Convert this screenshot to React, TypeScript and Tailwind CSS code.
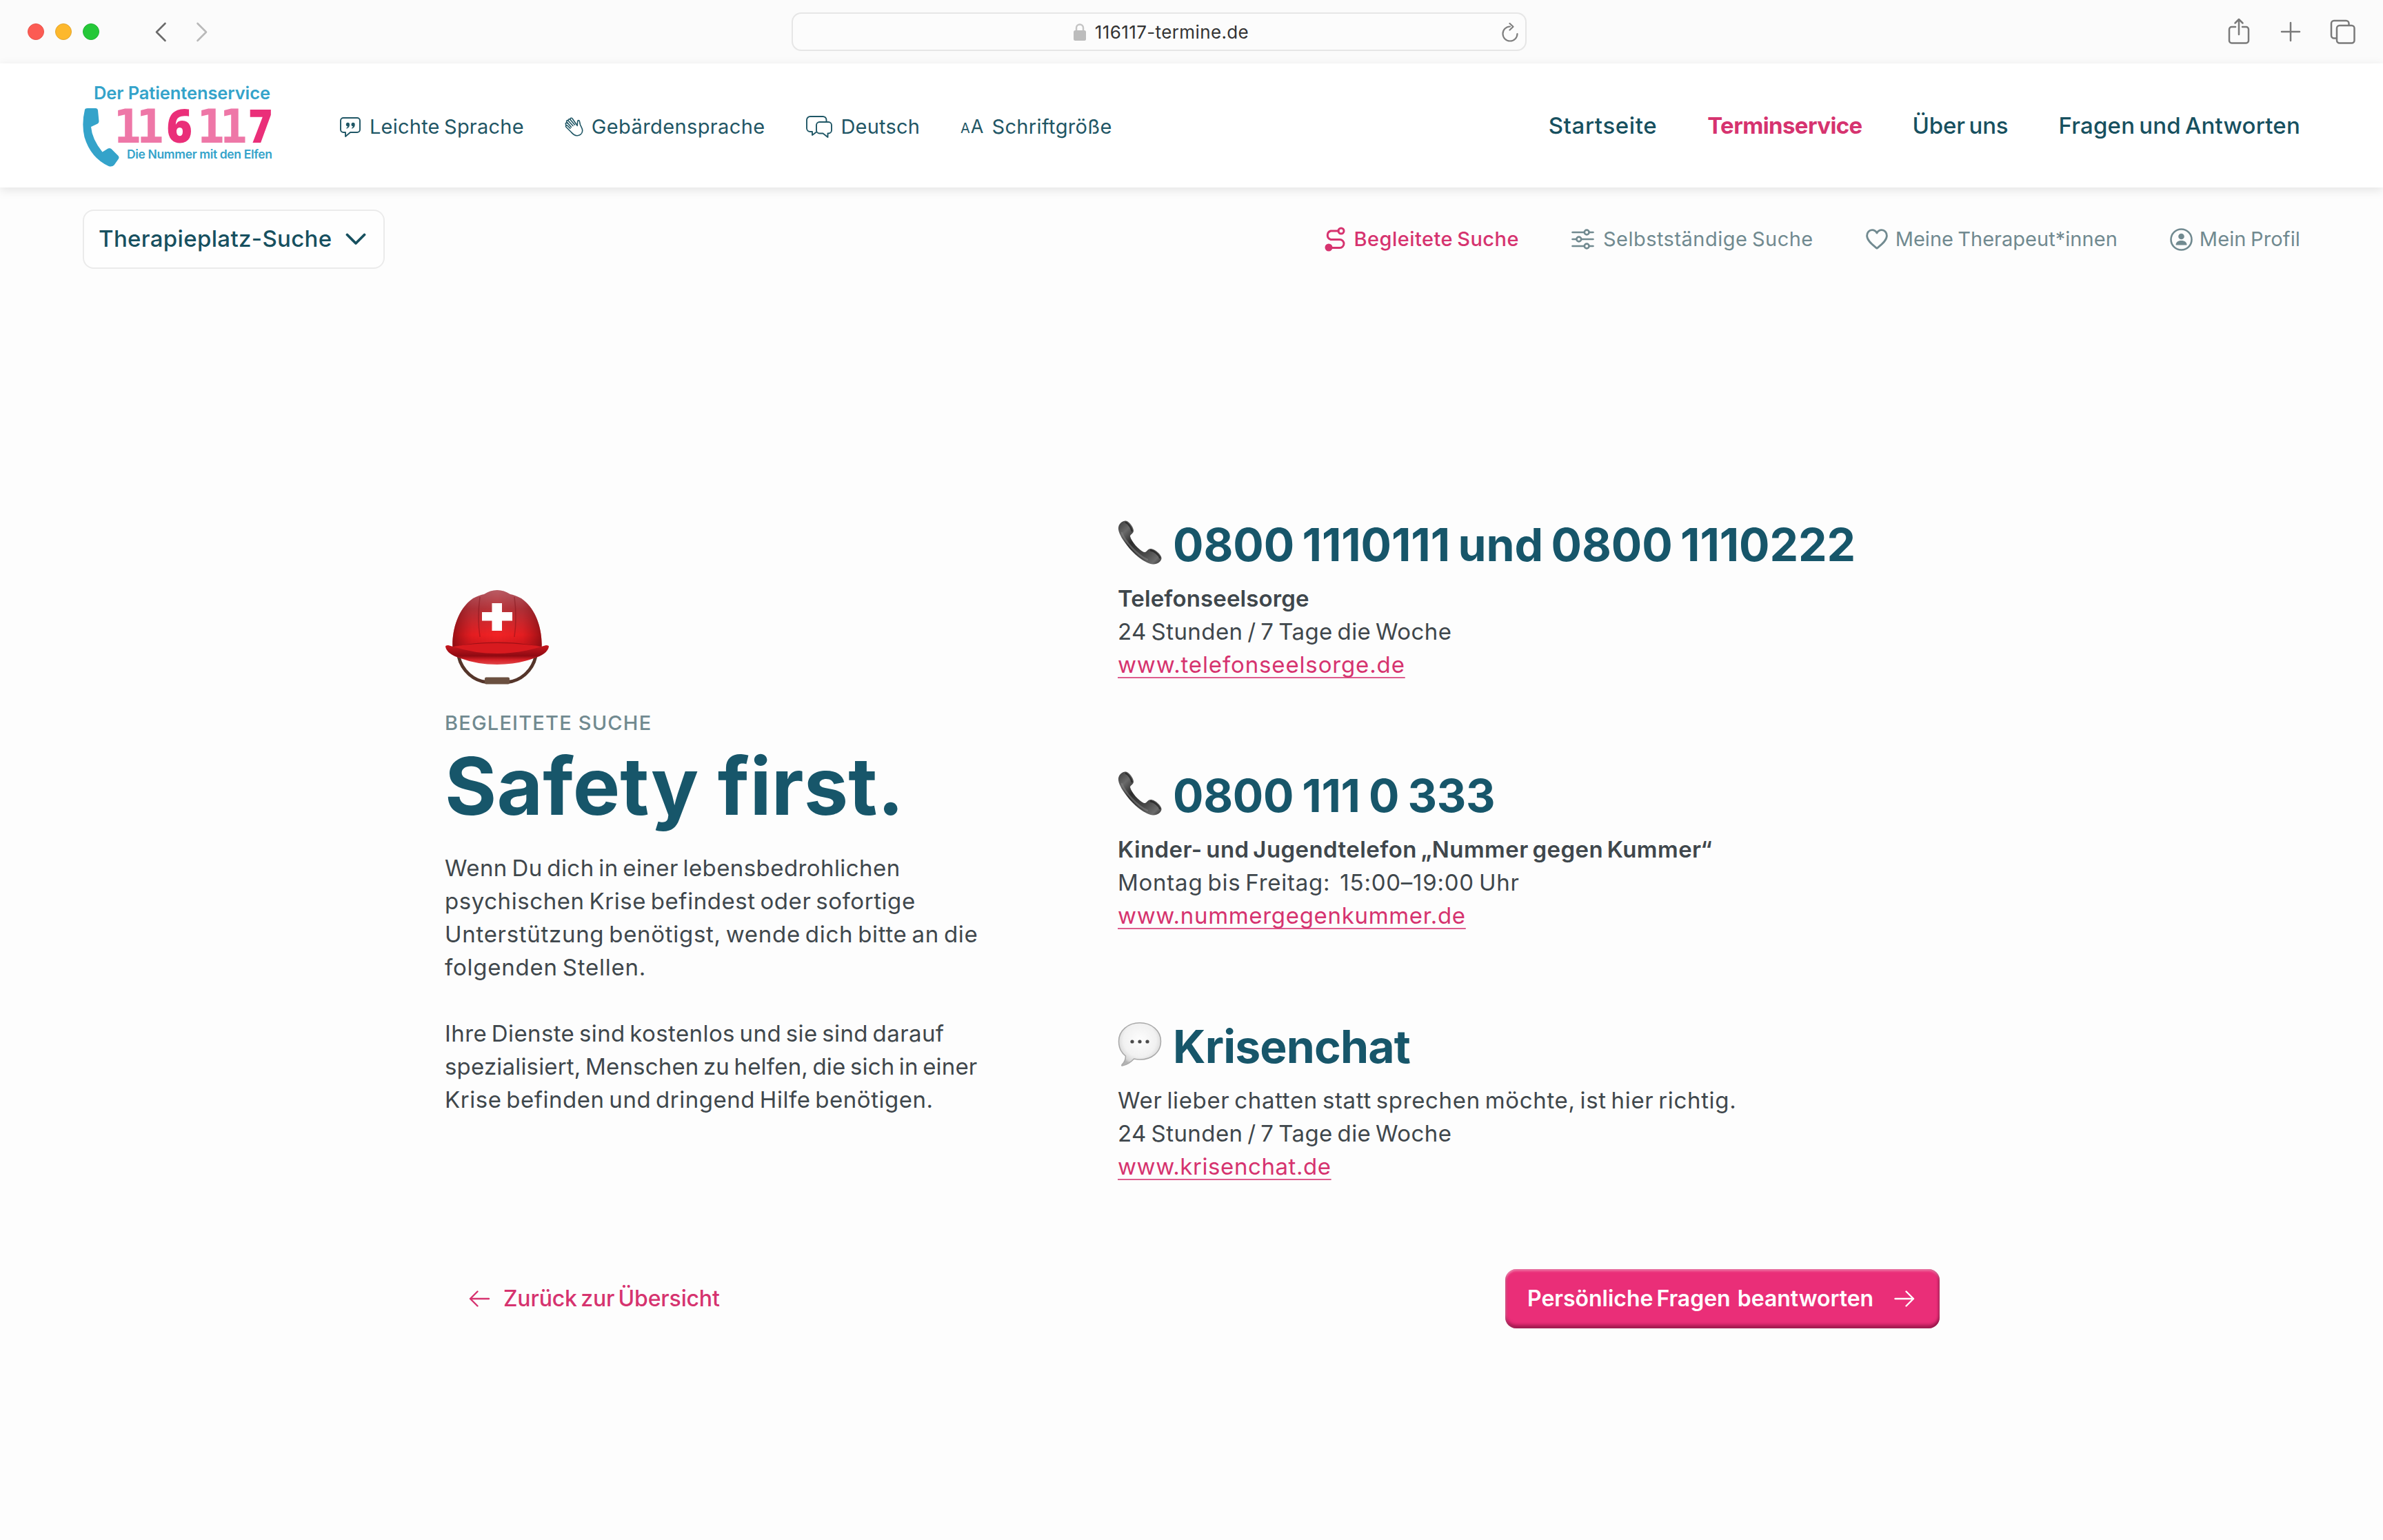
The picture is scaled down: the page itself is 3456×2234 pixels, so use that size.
import React from "react";

/* ---------- Browser chrome ---------- */

const BrowserBar = () => (
  <div className="grid h-[92px] shrink-0 grid-cols-[1148px_1066px_1fr] items-center bg-[#fbfbfb]">
    <div className="flex items-center pl-10">
      <div className="flex gap-4">
        <span className="size-6 rounded-full border border-[#e8554d] bg-[#fc5b53]" />
        <span className="size-6 rounded-full border border-[#e3a62f] bg-[#fdb82c]" />
        <span className="size-6 rounded-full border border-[#22b334] bg-[#25c838]" />
      </div>
      <svg className="ml-20 h-[30px] w-[18px]" viewBox="0 0 18 30" fill="none" stroke="#6b6b6b" strokeWidth="2.6" strokeLinecap="round" strokeLinejoin="round">
        <path d="M15.500 3L3 15.500L15.500 28" />
      </svg>
      <svg className="ml-[42px] h-[30px] w-[18px]" viewBox="0 0 18 30" fill="none" stroke="#b9b9b9" strokeWidth="2.6" strokeLinecap="round" strokeLinejoin="round">
        <path d="M2.500 3L15 15.500L2.500 28" />
      </svg>
    </div>
    <div className="relative flex h-14 items-center justify-center rounded-[14px] border-2 border-[#e6e6e6] bg-[#fcfcfc] pl-[5px] text-[26px] tracking-[0.38px] text-[#333]">
      <svg className="mr-3 h-[27px] w-5" viewBox="0 0 20 27">
        <path d="M5 12V7.500a5 5 0 0 1 10 0V12" fill="none" stroke="#c4c4c4" strokeWidth="2.400" />
        <rect x="1" y="11" width="18" height="15" rx="2.500" fill="#bcbcbc" />
      </svg>
      <span>116117-termine.de</span>
      <svg className="absolute right-2.5 top-[13px] h-7 w-6" viewBox="0 0 24 28" fill="none" stroke="#7f7f7f" strokeWidth="2.200" strokeLinecap="round" strokeLinejoin="round">
        <path d="M12 5.500A10.500 10.500 0 1 0 22.500 16" />
        <path d="M11.500 1L16.500 5.700L11.500 10.500" />
      </svg>
    </div>
    <div className="flex items-center justify-end gap-11 pr-10 text-[#7a7a7a]">
      <svg className="-mt-0.5 h-[38px] w-[32px]" viewBox="0 0 32 38" fill="none" stroke="currentColor" strokeWidth="2.500" strokeLinecap="round" strokeLinejoin="round">
        <path d="M11 13H5.500A3.500 3.500 0 0 0 2 16.500V33a3.500 3.500 0 0 0 3.500 3.500h21A3.500 3.500 0 0 0 30 33V16.500A3.500 3.500 0 0 0 26.500 13H21" />
        <path d="M16 24V2M10.500 7.500L16 2L21.500 7.500" />
      </svg>
      <svg className="-mr-0.5 h-[30px] w-[30px]" viewBox="0 0 30 30" fill="none" stroke="currentColor" strokeWidth="2.500" strokeLinecap="round">
        <path d="M15 2V28M2 15H28" />
      </svg>
      <svg className="h-[36px] w-[37px]" viewBox="0 0 37 36" fill="none" stroke="currentColor" strokeWidth="2.500" strokeLinejoin="round">
        <rect x="10" y="9" width="25.500" height="25.500" rx="4" />
        <path d="M10 27.500H6A4 4 0 0 1 2 23.500V6A4 4 0 0 1 6 2H23.500A4 4 0 0 1 27.500 6V9" />
      </svg>
    </div>
  </div>
);

/* ---------- Logo ---------- */

const Logo = () => (
  <svg className="h-[124px] w-[276px] shrink-0" viewBox="0 0 276 124" role="img" aria-label="116 117">
    <g fill="#34a3ca" fontFamily="Inter, sans-serif" fontWeight="600">
      <text x="16" y="24" fontSize="25.500" textLength="256">Der Patientenservice</text>
      <text x="64" y="109.500" fontSize="17.500" textLength="211">Die Nummer mit den Elfen</text>
      <path d="M3 39Q3.500 37 7 37H18.500Q21.500 37 22 40L23.500 56Q23.500 58.500 21.500 59.500L12 64Q13.500 82 28.500 100.500L36.500 95.500Q39 94.500 41.500 96L51.500 106Q53.500 108.500 51.500 111L45.500 119.500Q42.500 122.500 37.500 121Q11.500 109 2.500 79Q-2 60 3 39Z" />
    </g>
    <g fontWeight="800" fontFamily="'DejaVu Sans', sans-serif" fill="#ee77a7" fontSize="67" letterSpacing="-9.100">
      <text transform="translate(44.500 87) scale(0.880 1)">11</text>
      <text transform="translate(165.500 87) scale(0.880 1)">11</text>
    </g>
    <g fontWeight="800" fontFamily="'Open Sans', sans-serif" fill="#ea2f79" fontSize="68">
      <text transform="translate(121.500 87) scale(0.940 1)">6</text>
      <text transform="translate(240.500 87) scale(0.860 1)">7</text>
    </g>
  </svg>
);

/* ---------- Header icons ---------- */

const QuoteIcon = () => (
  <svg className="h-8 w-[30px]" viewBox="0 0 30 32" fill="none" stroke="currentColor" strokeWidth="1.900" strokeLinejoin="round">
    <path d="M5 3H25a4 4 0 0 1 4 4V20a4 4 0 0 1-4 4H15L8 30V24H5a4 4 0 0 1-4-4V7a4 4 0 0 1 4-4Z" />
    <g fill="currentColor" stroke="none">
      <path d="M11 9.800a3 3 0 0 1 3 3.200c0 2.700-1.700 4.700-4 5.400-.7.200-1-.7-.5-1 1-.5 1.600-1.100 1.800-1.800a2.950 2.950 0 0 1-.3-5.800Z" />
      <path d="M18.700 9.800a3 3 0 0 1 3 3.200c0 2.700-1.700 4.700-4 5.400-.7.200-1-.7-.5-1 1-.5 1.600-1.100 1.800-1.800a2.950 2.950 0 0 1-.3-5.800Z" />
    </g>
  </svg>
);

const HandIcon = () => (
  <svg className="h-7 w-[27px]" viewBox="0 0 27 28" fill="none" stroke="currentColor" strokeWidth="1.600" strokeLinecap="round" strokeLinejoin="round">
    <path d="M9.500 14.500L3 7C1.800 5.300 3.800 3.700 5.200 5.200L12 12.500" />
    <path d="M5.200 5.200C4.800 3.200 6.700 2 8 3.500L14.500 11" />
    <path d="M8 3.500C7.600 1.200 10.200.5 11.200 2.200L18.200 12.300L18.700 6C19 4 21.300 4.200 21.500 6.200L22.400 10.500C23.500 14 26 16 25.700 20C25.300 24.500 21.500 27 17.500 26.700C13.500 26.400 11.500 24 9.500 21.800L2 14.300C.7 12.600 2.500 11 4 12.300L8 16.200" />
    <path d="M2.200 11.800L1.500 10.300C.8 8.400 2.800 7.400 4.200 8.900" />
  </svg>
);

const ChatsIcon = () => (
  <svg className="h-8 w-[38px]" viewBox="0 0 38 32" fill="none" stroke="currentColor" strokeWidth="1.900" strokeLinejoin="round">
    <path d="M15 23.500L9 28V23H6A5 5 0 0 1 1 18V6A5 5 0 0 1 6 1H24A5 5 0 0 1 29.500 6V9" />
    <path d="M19.500 9H32.500A4.500 4.500 0 0 1 37 13.500V21A4.500 4.500 0 0 1 32.500 25.500H31.500V31L24.500 25.500H19.500A4.500 4.500 0 0 1 15 21V13.500A4.500 4.500 0 0 1 19.500 9Z" />
  </svg>
);

const FontSizeIcon = () => (
  <span className="flex items-baseline gap-px leading-none">
    <span className="text-[20px] leading-none">A</span>
    <span className="text-[27px] leading-none">A</span>
  </span>
);

/* ---------- Sub navigation icons ---------- */

const RouteIcon = () => (
  <svg className="h-9 w-[30px]" viewBox="0 0 30 36" fill="none" stroke="currentColor" strokeWidth="3" strokeLinecap="round">
    <circle cx="24" cy="6" r="4" />
    <path d="M20 6H9A6.500 6.500 0 0 0 9 18.500H22A6 6 0 0 1 22 30.500H8" />
    <circle cx="6" cy="30" r="5.500" fill="currentColor" stroke="none" />
  </svg>
);

const SlidersIcon = () => (
  <svg className="h-[30px] w-[33px]" viewBox="0 0 33 30" fill="none" stroke="currentColor" strokeWidth="2.600" strokeLinecap="round">
    <path d="M1.500 5H18.500M26 5H31.500M1.500 15H7M14.500 15H31.500M1.500 25H18.500M26 25H31.500" />
    <circle cx="22.200" cy="5" r="3.400" />
    <circle cx="10.800" cy="15" r="3.400" />
    <circle cx="22.200" cy="25" r="3.400" />
  </svg>
);

const HeartIcon = () => (
  <svg className="h-[30px] w-8" viewBox="0 0 32 30" fill="none" stroke="currentColor" strokeWidth="2.800" strokeLinejoin="round">
    <path d="M16 28.300C11 24 1.600 17.500 1.600 10C1.600 5 5 1.700 9 1.700C12 1.700 14.500 3.300 16 6C17.500 3.300 20 1.700 23 1.700C27 1.700 30.400 5 30.400 10C30.400 17.500 21 24 16 28.300Z" />
  </svg>
);

const ProfileIcon = () => (
  <svg className="size-[33px]" viewBox="0 0 33 33">
    <circle cx="16.500" cy="16.500" r="15" fill="none" stroke="currentColor" strokeWidth="2.600" />
    <circle cx="16.500" cy="12" r="4.300" fill="currentColor" />
    <path d="M8.500 24.500C8.500 20.500 11.500 18 16.500 18C21.500 18 24.500 20.500 24.500 24.500Z" fill="currentColor" />
  </svg>
);

/* ---------- Emoji style illustrations ---------- */

const Helmet = () => (
  <svg className="ml-px h-[138px] w-[150px]" viewBox="0 0 150 138">
    <defs>
      <linearGradient id="dome" x1="0" y1="0" x2="0" y2="1">
        <stop offset="0" stopColor="#b0606a" />
        <stop offset="0.300" stopColor="#b0343b" />
        <stop offset="0.720" stopColor="#f01f22" />
        <stop offset="1" stopColor="#c3141a" />
      </linearGradient>
      <linearGradient id="side" x1="0" y1="0" x2="1" y2="0">
        <stop offset="0" stopColor="#5e060c" stopOpacity="0.600" />
        <stop offset="0.220" stopColor="#8c0b12" stopOpacity="0.120" />
        <stop offset="0.500" stopColor="#ff3a36" stopOpacity="0.120" />
        <stop offset="0.780" stopColor="#8c0b12" stopOpacity="0.120" />
        <stop offset="1" stopColor="#5e060c" stopOpacity="0.600" />
      </linearGradient>
      <linearGradient id="brim" x1="0" y1="0" x2="0" y2="1">
        <stop offset="0" stopColor="#c8171e" />
        <stop offset="0.550" stopColor="#8f0a12" />
        <stop offset="0.750" stopColor="#d51f25" />
        <stop offset="1" stopColor="#e2474b" />
      </linearGradient>
    </defs>
    <path d="M19 96C24 118 42 132 60 133.500H90C108 132 126 118 131 96" fill="none" stroke="#55352a" strokeWidth="4.800" />
    <rect x="57" y="126.500" width="36" height="10" rx="2" fill="#6b5040" />
    <path d="M11 90C8 68 14 30 40 12Q50 7 56 6Q65 0 75 0Q85 0 94 6Q100 7 110 12C136 30 142 68 139 90Z" fill="url(#dome)" />
    <path d="M11 90C8 68 14 30 40 12Q50 7 56 6Q65 0 75 0Q85 0 94 6Q100 7 110 12C136 30 142 68 139 90Z" fill="url(#side)" />
    <path d="M50 10Q46 40 50 68M100 10Q104 40 100 68" fill="none" stroke="#7c1016" strokeOpacity="0.450" strokeWidth="1.500" />
    <path d="M14 84Q40 77 75 77Q110 77 136 84" fill="none" stroke="#7c0a10" strokeOpacity="0.600" strokeWidth="3" />
    <path d="M11 82Q42 77 75 77Q108 77 139 82V93H11Z" fill="#d81a1f" />
    <path d="M0 82Q0 80 4 80L11 82Q42 92 75 92Q108 92 139 82L146 80Q150 80 150 82Q148 93 128 99Q104 108 75 108Q46 108 22 99Q2 93 0 82Z" fill="url(#brim)" />
    <path d="M67.500 19H82V32H97V44.500H82V59H67.500V44.500H53V32H67.500Z" fill="#fff" />
  </svg>
);

const PhoneEmoji = () => (
  <svg className="size-16" viewBox="0 0 64 64">
    <defs>
      <linearGradient id="handset" x1="0" y1="0" x2="1" y2="1">
        <stop offset="0" stopColor="#3a3a3a" />
        <stop offset="0.200" stopColor="#6a6a6a" />
        <stop offset="0.400" stopColor="#2c2c2c" />
        <stop offset="0.700" stopColor="#4a4a4a" />
        <stop offset="0.880" stopColor="#6c6c6c" />
        <stop offset="1" stopColor="#2b2b2b" />
      </linearGradient>
    </defs>
    <path d="M1 13C0 6 6 0 12 .5C17 1.500 23 10 23 15C23 19 18 20 18 23C20 31 31 43 38 46C42 47 43 41 48 41C54 41 64 50 63.500 55C63 60 57 64 51 63.500C41 62.500 25 51 15 38C7 28 2 20 1 13Z" fill="url(#handset)" />
    <path d="M6 18C10 30 28 50 43 57" fill="none" stroke="#858585" strokeOpacity="0.500" strokeWidth="2.500" strokeLinecap="round" />
    <path d="M12 3C16 5 20 11 20.500 15M48 43.500C53 44 60 50 61 54" fill="none" stroke="#1d1d1d" strokeOpacity="0.700" strokeWidth="2.500" strokeLinecap="round" />
  </svg>
);

const BubbleEmoji = () => (
  <svg className="size-16" viewBox="0 0 64 64">
    <defs>
      <radialGradient id="bubble" cx="0.500" cy="0.400" r="0.600">
        <stop offset="0" stopColor="#fdfdfd" />
        <stop offset="0.650" stopColor="#f1f1f1" />
        <stop offset="0.900" stopColor="#d6d6d6" />
        <stop offset="1" stopColor="#b4b4b4" />
      </radialGradient>
    </defs>
    <path d="M32 .8C49 .8 62.500 12 62.500 27.500C62.500 43 50 54 32 54C29 54 26 53.500 23.500 53C19 58 12 62 6.500 63C5.500 63 5.500 62 6.500 61C10 57.500 11.500 53 11.500 49C5 44 1.500 36.500 1.500 27.500C1.500 12 15 .8 32 .8Z" fill="url(#bubble)" stroke="#a9a9a9" strokeWidth="1.500" />
    <g fill="#4a4a4a">
      <circle cx="21" cy="28" r="2.600" />
      <circle cx="32" cy="28" r="2.600" />
      <circle cx="43" cy="28" r="2.600" />
    </g>
  </svg>
);

/* ---------- Page ---------- */

const Header = () => (
  <header className="relative flex h-[180px] shrink-0 items-center justify-between bg-white px-[120px] shadow-[0_4px_14px_rgba(0,0,0,0.10)]">
    <div className="flex items-center">
      <Logo />
      <nav className="ml-[97px] flex items-center gap-[59px] pt-[3px] text-[29px] text-[#1f5665] [word-spacing:-2px]">
        <a className="flex items-center gap-[13px]">
          <QuoteIcon />
          <span className="tracking-[0.22px]">Leichte Sprache</span>
        </a>
        <a className="flex items-center gap-3">
          <HandIcon />
          <span className="tracking-[0.38px]">Gebärdensprache</span>
        </a>
        <a className="flex items-center gap-[13px]">
          <ChatsIcon />
          <span className="tracking-[0.18px]">Deutsch</span>
        </a>
        <a className="flex items-center gap-3">
          <FontSizeIcon />
          <span className="tracking-[0.36px]">Schriftgröße</span>
        </a>
      </nav>
    </div>
    <nav className="flex items-center gap-[73px] pt-0.5 text-[33px] font-medium text-[#17505f] [word-spacing:-3px]">
      <a className="tracking-[0.61px]">Startseite</a>
      <a className="font-bold tracking-[-0.61px] text-[#d6336f]">Terminservice</a>
      <a className="tracking-[-0.18px]">Über uns</a>
      <a className="tracking-[0.2px]">Fragen und Antworten</a>
    </nav>
  </header>
);

const SubNav = () => (
  <div className="mt-8 flex h-[86px] shrink-0 items-center justify-between px-[120px]">
    <button className="flex h-[86px] w-[438px] items-center justify-between rounded-2xl border-2 border-[#ebebeb] bg-[#fefefe] pr-[25px] pl-[21px] text-[33px] font-medium tracking-[0.34px] text-[#17505f]">
      Therapieplatz-Suche
      <svg className="h-[18px] w-[30px]" viewBox="0 0 30 18" fill="none" stroke="currentColor" strokeWidth="3.800" strokeLinecap="round" strokeLinejoin="round">
        <path d="M2.500 2.500L15 15L27.500 2.500" />
      </svg>
    </button>
    <nav className="flex items-center gap-[76px] text-[29px] text-[#718a90] [word-spacing:-2px]">
      <a className="flex items-center gap-[13px] font-medium text-[#d6336f]">
        <RouteIcon />
        <span className="tracking-[0.46px]">Begleitete Suche</span>
      </a>
      <a className="flex items-center gap-[13px]">
        <SlidersIcon />
        <span className="tracking-[0.48px]">Selbstständige Suche</span>
      </a>
      <a className="flex items-center gap-[11px]">
        <HeartIcon />
        <span className="tracking-[0.03px]">Meine Therapeut*innen</span>
      </a>
      <a className="flex items-center gap-[10px]">
        <ProfileIcon />
        <span className="tracking-[0.15px]">Mein Profil</span>
      </a>
    </nav>
  </div>
);

const Intro = () => (
  <section className="pt-[466px]">
    <Helmet />
    <p className="mt-[35px] text-[29px] leading-10 font-medium tracking-[1.2px] text-[#718a90]">BEGLEITETE SUCHE</p>
    <h1 className="mt-3 text-[115px] leading-[120px] font-bold tracking-[0.1px] text-[#17566a]">Safety first.</h1>
    <p className="mt-[34px] text-[33px] leading-[48px] text-[#3f474c] [word-spacing:-3px]">
      <span className="block tracking-[0.42px]">Wenn Du dich in einer lebensbedrohlichen</span>
      <span className="block tracking-[0.56px]">psychischen Krise befindest oder sofortige</span>
      <span className="block tracking-[0.7px]">Unterstützung benötigst, wende dich bitte an die</span>
      <span className="block tracking-[0.76px]">folgenden Stellen.</span>
    </p>
    <p className="mt-12 text-[33px] leading-[48px] text-[#3f474c] [word-spacing:-3px]">
      <span className="block tracking-[0.4px]">Ihre Dienste sind kostenlos und sie sind darauf</span>
      <span className="block tracking-[0.18px]">spezialisiert, Menschen zu helfen, die sich in einer</span>
      <span className="block tracking-[0.53px]">Krise befinden und dringend Hilfe benötigen.</span>
    </p>
  </section>
);

const linkClass =
  "self-start text-[#d6336f] underline decoration-[#dd5c8d] decoration-2 underline-offset-[6px] [text-decoration-skip-ink:none]";

const Contacts = () => (
  <section className="flex flex-col gap-[134px] pt-[368px] text-[33px] leading-[48px] whitespace-pre text-[#3f474c] [word-spacing:-3px]">
    <article className="flex flex-col">
      <div className="mb-[22px] flex h-16 items-center gap-4">
        <div className="-mt-1.5"><PhoneEmoji /></div>
        <h2 className="text-[66px] font-bold tracking-[-0.11px] text-[#17566a] [word-spacing:-4px]">0800 1110111 und 0800 1110222</h2>
      </div>
      <p className="font-semibold tracking-[0.12px]">Telefonseelsorge</p>
      <p className="tracking-[0.44px]">24 Stunden / 7 Tage die Woche</p>
      <a className={linkClass + " tracking-[0.86px]"}>www.telefonseelsorge.de</a>
    </article>
    <article className="flex flex-col">
      <div className="mb-[22px] flex h-16 items-center gap-4">
        <div className="-mt-1.5"><PhoneEmoji /></div>
        <h2 className="text-[66px] font-bold tracking-[-0.35px] text-[#17566a] [word-spacing:-3px]">0800 111 0 333</h2>
      </div>
      <p className="font-semibold tracking-[0.42px]">Kinder- und Jugendtelefon „Nummer gegen Kummer“</p>
      <p className="tracking-[0.76px]">{"Montag bis Freitag:  15:00–19:00 Uhr"}</p>
      <a className={linkClass + " tracking-[0.68px]"}>www.nummergegenkummer.de</a>
    </article>
    <article className="flex flex-col">
      <div className="mb-[22px] flex h-16 items-center gap-4">
        <div className="-mt-1.5"><BubbleEmoji /></div>
        <h2 className="text-[66px] font-bold tracking-[-0.83px] text-[#17566a]">Krisenchat</h2>
      </div>
      <p className="tracking-[0.65px]">Wer lieber chatten statt sprechen möchte, ist hier richtig.</p>
      <p className="tracking-[0.44px]">24 Stunden / 7 Tage die Woche</p>
      <a className={linkClass + " tracking-[0.57px]"}>www.krisenchat.de</a>
    </article>
  </section>
);

const Actions = () => (
  <div className="mt-[125px] flex items-center justify-between pr-[643px] pl-[680px] text-[32px] font-semibold">
    <a className="flex items-center gap-[19px] font-medium tracking-[-0.16px] text-[#d6336f] [word-spacing:-3px]">
      <svg className="h-6 w-[31px]" viewBox="0 0 31 24" fill="none" stroke="currentColor" strokeWidth="2.400" strokeLinecap="round" strokeLinejoin="round">
        <path d="M29 12H2M12.500 1.500L2 12L12.500 22.500" />
      </svg>
      Zurück zur Übersicht
    </a>
    <button className="flex h-[86px] w-[630px] items-center justify-between rounded-2xl bg-[#ea2e78] pr-9 pl-8 tracking-[-0.02px] whitespace-pre text-white shadow-[inset_0_-5px_4px_rgba(110,10,50,0.55),inset_0_3px_3px_rgba(255,255,255,0.3),inset_2px_0_3px_rgba(255,255,255,0.2),inset_-2px_0_3px_rgba(110,10,50,0.35)] [word-spacing:-3px]">
      {"Persönliche Fragen  beantworten"}
      <svg className="h-6 w-[30px]" viewBox="0 0 30 24" fill="none" stroke="currentColor" strokeWidth="2.400" strokeLinecap="round" strokeLinejoin="round">
        <path d="M1.500 12H28M17.500 1.500L28 12L17.500 22.500" />
      </svg>
    </button>
  </div>
);

export default function App() {
  return (
    <div className="flex h-[2234px] w-[3456px] flex-col overflow-hidden bg-[#fdfdfd] font-['Inter',sans-serif]">
      <BrowserBar />
      <Header />
      <SubNav />
      <main>
        <div className="grid grid-cols-[976px_1fr] pl-[645px]">
          <Intro />
          <Contacts />
        </div>
        <Actions />
      </main>
    </div>
  );
}
